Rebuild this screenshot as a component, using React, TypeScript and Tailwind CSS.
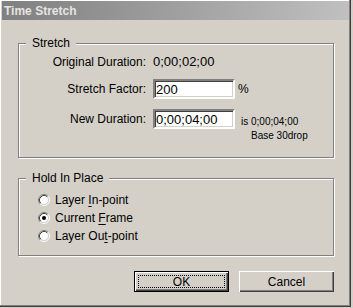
// Diálogo "Time Stretch" no estilo clássico do Windows.
const FONT = "font-['Liberation_Sans',Arial,sans-serif]";

function Radio({ checked }: { checked?: boolean }) {
  return (
    <svg width="12" height="12" viewBox="0 0 12 12" className="shrink-0">
      <circle cx="6" cy="6" r="4.5" fill="#fff" />
      <path d="M2.11 9.89A5.5 5.5 0 0 1 9.89 2.11" fill="none" stroke="#808080" />
      <path d="M9.89 2.11A5.5 5.5 0 0 1 2.11 9.89" fill="none" stroke="#fff" />
      <path d="M2.82 9.18A4.5 4.5 0 0 1 9.18 2.82" fill="none" stroke="#404040" />
      <path d="M9.18 2.82A4.5 4.5 0 0 1 2.82 9.18" fill="none" stroke="#d4d0c8" />
      {checked && <circle cx="6" cy="6" r="2" fill="#000" />}
    </svg>
  );
}

function Field({ value }: { value: string }) {
  return (
    <input
      readOnly
      defaultValue={value}
      className="w-[82px] h-[20px] bg-white border-2 border-t-[#808080] border-l-[#808080] border-b-white border-r-white shadow-[inset_1px_1px_0_#404040,inset_-1px_-1px_0_#d4d0c8] pl-[1px] text-[13px] leading-[16px] text-black outline-none"
    />
  );
}

function Group({
  label,
  className,
  children,
}: {
  label: string;
  className: string;
  children: React.ReactNode;
}) {
  return (
    <fieldset
      className={`border border-[#808080] shadow-[1px_1px_0_#fff,inset_1px_1px_0_#fff] ${className}`}
    >
      <legend className="ml-[7px] px-[6px] bg-[#d4d0c8] text-[12px] leading-[14px]">
        {label}
      </legend>
      {children}
    </fieldset>
  );
}

export default function App() {
  return (
    <div className={`w-[353px] h-[308px] bg-[#d4d0c8] text-black ${FONT}`}>
      <div className="w-[351px] h-[307px] flex flex-col border-r border-b border-[#404040] shadow-[inset_-1px_-1px_0_#808080,inset_1px_1px_0_#fff] pt-[1px] pl-[2px] pr-[1px]">
        <div className="h-[19px] flex items-center pl-[2px] bg-linear-to-r from-[#808080] to-[#c0c0c0] text-[12px] font-bold text-[#e4e4e4]">
          Time Stretch
        </div>

        <div className="flex flex-col pl-[16px] pr-[15px]">
          <Group label="Stretch" className="mt-[16px] h-[122px]">
            <div className="flex flex-col pt-[5px] text-[12px]">
              <div className="flex items-center h-[14px] leading-[14px]">
                <span className="w-[127px] text-right">Original Duration:</span>
                <span className="ml-[7px] text-[13px]">0;00;02;00</span>
              </div>
              <div className="flex items-center mt-[10px]">
                <span className="w-[127px] text-right">Stretch Factor:</span>
                <div className="ml-[7px]">
                  <Field value="200" />
                </div>
                <span className="ml-[3px]">%</span>
              </div>
              <div className="flex items-start mt-[10px]">
                <span className="w-[127px] text-right leading-[20px]">New Duration:</span>
                <div className="ml-[7px]">
                  <Field value="0;00;04;00" />
                </div>
                <div className="ml-[6px] mt-[6px] flex flex-col text-[10px] leading-[14px]">
                  <span>is 0;00;04;00</span>
                  <span className="pl-[10px]">Base 30drop</span>
                </div>
              </div>
            </div>
          </Group>

          <Group label="Hold In Place" className="mt-[13px] h-[85px]">
            <div className="flex flex-col pt-[6px] pl-[19px] text-[12px]">
              <label className="flex items-center gap-[5px] h-[18px]">
                <Radio />
                <span>
                  Layer <u className="underline-offset-2">I</u>n-point
                </span>
              </label>
              <label className="flex items-center gap-[5px] h-[18px]">
                <Radio checked />
                <span>
                  Current <u className="underline-offset-2">F</u>rame
                </span>
              </label>
              <label className="flex items-center gap-[5px] h-[18px]">
                <Radio />
                <span>
                  Layer Ou<u className="underline-offset-2">t</u>-point
                </span>
              </label>
            </div>
          </Group>

          <div className="mt-[15px] flex justify-end gap-[10px] text-[12px]">
            <button
              type="button"
              className="relative w-[95px] h-[21px] border border-black bg-[#d4d0c8] shadow-[inset_1px_1px_0_#fff,inset_-1px_-1px_0_#404040,inset_-2px_-2px_0_#808080]"
            >
              <span className="absolute inset-[3px] border border-dotted border-black" />
              OK
            </button>
            <button
              type="button"
              className="w-[95px] h-[21px] bg-[#d4d0c8] shadow-[inset_1px_1px_0_#fff,inset_-1px_-1px_0_#404040,inset_-2px_-2px_0_#808080]"
            >
              Cancel
            </button>
          </div>
        </div>
      </div>
    </div>
  );
}
